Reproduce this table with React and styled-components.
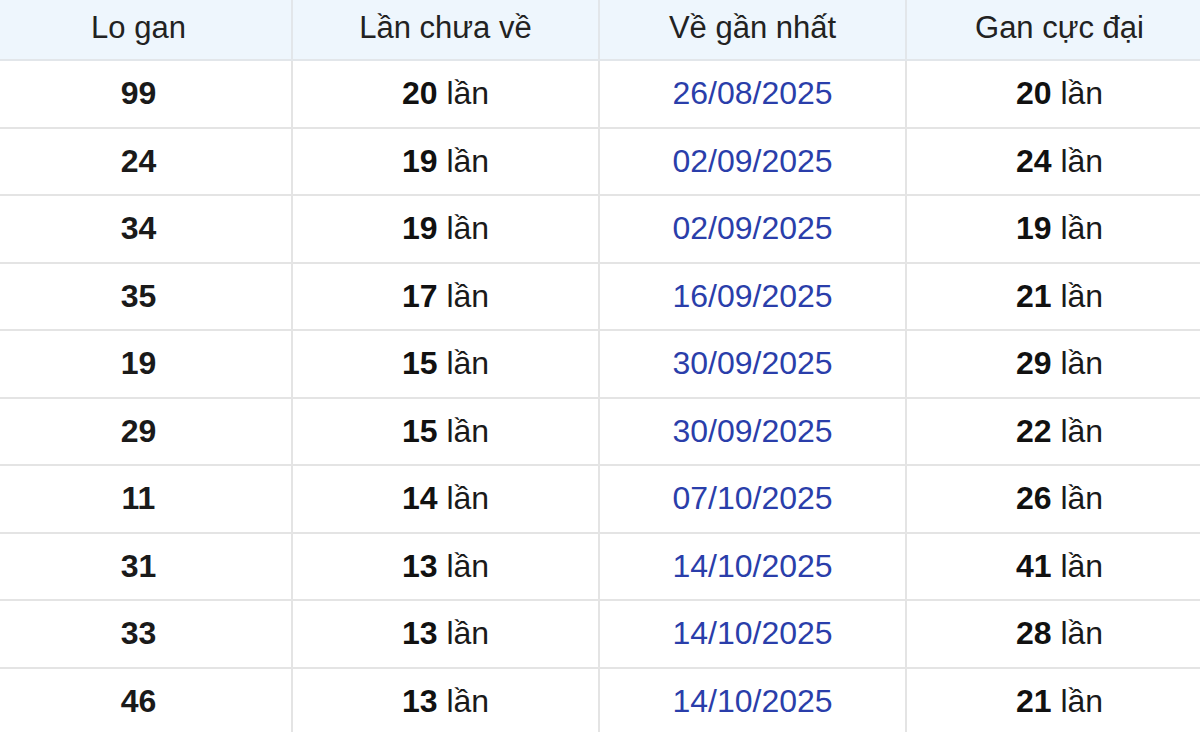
import React from "react";
import styled, { createGlobalStyle } from "styled-components";

const GlobalStyle = createGlobalStyle`
  html, body {
    margin: 0;
    padding: 0;
    background: #ffffff;
    overflow: hidden;
  }
  body {
    font-family: "Liberation Sans", Arial, sans-serif;
  }
`;

const Wrap = styled.div`
  width: 1200px;
  height: 732px;
  overflow: hidden;
`;

const Table = styled.table`
  width: 1230px;
  margin-left: -16px;
  border-collapse: collapse;
  table-layout: fixed;
`;

const HeadCell = styled.th`
  height: 56px;
  padding: 0 0 3px;
  background: #eef6fd;
  color: #222222;
  font-size: 31px;
  font-weight: 400;
  text-align: center;
  border: 2px solid #e2e6ea;
  border-top: none;
`;

const Cell = styled.td`
  height: 65.5px;
  padding: 0;
  text-align: center;
  font-size: 32px;
  color: ${(p) => (p.$date ? "#2a3eaa" : "#1a1a1a")};
  font-weight: ${(p) => (p.$bold ? 700 : 400)};
  border: 2px solid #e4e4e4;
`;

const Count = styled.b`
  font-weight: 700;
  color: #111111;
`;

const rows = [
  ["99", 20, "26/08/2025", 20],
  ["24", 19, "02/09/2025", 24],
  ["34", 19, "02/09/2025", 19],
  ["35", 17, "16/09/2025", 21],
  ["19", 15, "30/09/2025", 29],
  ["29", 15, "30/09/2025", 22],
  ["11", 14, "07/10/2025", 26],
  ["31", 13, "14/10/2025", 41],
  ["33", 13, "14/10/2025", 28],
  ["46", 13, "14/10/2025", 21],
];

const Times = ({ n }) => (
  <>
    <Count>{n}</Count> lần
  </>
);

export default function App() {
  return (
    <Wrap>
      <GlobalStyle />
      <Table>
        <thead>
          <tr>
            <HeadCell>Lo gan</HeadCell>
            <HeadCell>Lần chưa về</HeadCell>
            <HeadCell>Về gần nhất</HeadCell>
            <HeadCell>Gan cực đại</HeadCell>
          </tr>
        </thead>
        <tbody>
          {rows.map(([num, miss, date, max]) => (
            <tr key={num}>
              <Cell $bold>{num}</Cell>
              <Cell>
                <Times n={miss} />
              </Cell>
              <Cell $date>{date}</Cell>
              <Cell>
                <Times n={max} />
              </Cell>
            </tr>
          ))}
        </tbody>
      </Table>
    </Wrap>
  );
}
